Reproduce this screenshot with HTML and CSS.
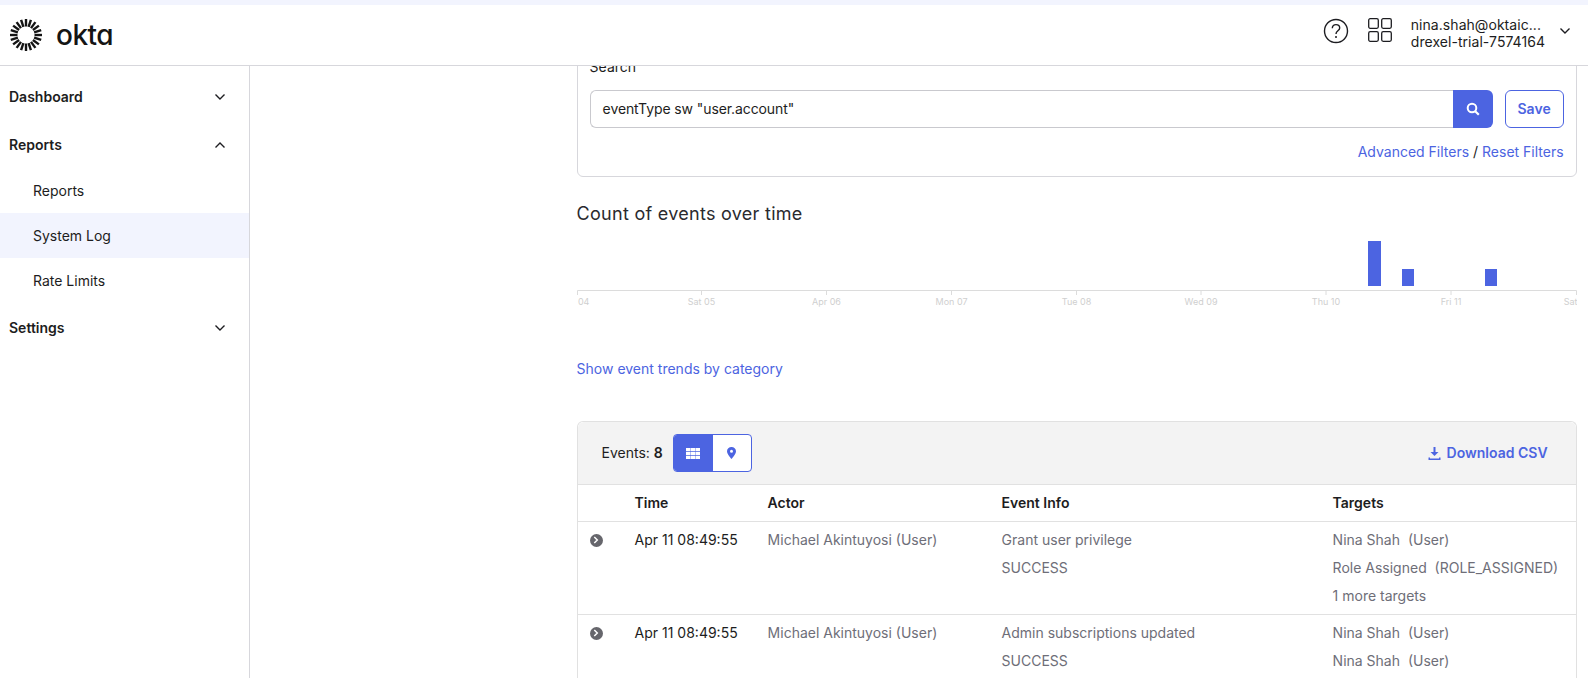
FILE: index.html
```html
<!DOCTYPE html>
<html lang="en">
<head>
<meta charset="utf-8">
<title>System Log</title>
<link rel="stylesheet" href="styles.css">
</head>
<body>
<div class="strip"></div>
<header class="topbar">
  <div class="brand">
    <svg class="sunburst" width="34" height="34" viewBox="-17 -17 34 34" aria-hidden="true">
      <g stroke="#141414" stroke-width="2.4" fill="none">
        <path d="M0-8.5V-16"/><path d="M2.6-8.1L4.9-15.2"/><path d="M5-6.9L9.4-12.9"/><path d="M6.9-5L12.9-9.4"/><path d="M8.1-2.6L15.2-4.9"/><path d="M8.5 0H16"/><path d="M8.1 2.6L15.2 4.9"/><path d="M6.9 5L12.9 9.4"/><path d="M5 6.9L9.4 12.9"/><path d="M2.6 8.1L4.9 15.2"/><path d="M0 8.5V16"/><path d="M-2.6 8.1L-4.9 15.2"/><path d="M-5 6.9L-9.4 12.9"/><path d="M-6.9 5L-12.9 9.4"/><path d="M-8.1 2.6L-15.2 4.9"/><path d="M-8.5 0H-16"/><path d="M-8.1-2.6L-15.2-4.9"/><path d="M-6.9-5L-12.9-9.4"/><path d="M-5-6.9L-9.4-12.9"/><path d="M-2.6-8.1L-4.9-15.2"/>
      </g>
    </svg>
    <span class="wordmark">okta</span>
  </div>
  <div class="top-actions">
    <svg class="help" width="26" height="26" viewBox="0 0 26 26" aria-hidden="true">
      <circle cx="13" cy="13" r="11.5" fill="none" stroke="#1d1d21" stroke-width="1.4"/>
      <path d="M9.3 10.2c0-2.2 1.6-3.6 3.7-3.6s3.7 1.4 3.7 3.3c0 2.8-3.7 3-3.7 6" fill="none" stroke="#1d1d21" stroke-width="1.4"/>
      <circle cx="13" cy="19" r="1" fill="#1d1d21"/>
    </svg>
    <svg class="apps" width="24" height="24" viewBox="0 0 24 24" aria-hidden="true">
      <g fill="none" stroke="#1d1d21" stroke-width="1.3">
        <rect x="0.7" y="0.7" width="9.6" height="9.6" rx="1.5"/><rect x="13.7" y="0.7" width="9.6" height="9.6" rx="1.5"/>
        <rect x="0.7" y="13.7" width="9.6" height="9.6" rx="1.5"/><rect x="13.7" y="13.7" width="9.6" height="9.6" rx="1.5"/>
      </g>
    </svg>
    <div class="user">
      <div>nina.shah@oktaic...</div>
      <div>drexel-trial-7574164</div>
    </div>
    <svg class="chev" width="12" height="8" viewBox="0 0 12 8" aria-hidden="true"><path d="M1.5 1.5L6 6l4.5-4.5" fill="none" stroke="#1d1d21" stroke-width="1.4"/></svg>
  </div>
</header>
<div class="shell">
  <nav class="side">
    <div class="nav-group"><span>Dashboard</span><svg class="chev" width="12" height="8" viewBox="0 0 12 8" aria-hidden="true"><path d="M1.5 1.5L6 6l4.5-4.5" fill="none" stroke="#1d1d21" stroke-width="1.4"/></svg></div>
    <div class="nav-group reports"><span>Reports</span><svg class="chev" width="12" height="8" viewBox="0 0 12 8" aria-hidden="true"><path d="M1.5 6.5L6 2l4.5 4.5" fill="none" stroke="#1d1d21" stroke-width="1.4"/></svg></div>
    <div class="nav-sub">Reports</div>
    <div class="nav-sub active">System Log</div>
    <div class="nav-sub">Rate Limits</div>
    <div class="nav-group settings"><span>Settings</span><svg class="chev" width="12" height="8" viewBox="0 0 12 8" aria-hidden="true"><path d="M1.5 1.5L6 6l4.5-4.5" fill="none" stroke="#1d1d21" stroke-width="1.4"/></svg></div>
  </nav>
  <main class="main">
    <section class="search-panel">
      <div class="search-label">Search</div>
      <div class="search-row">
        <div class="search-input">eventType sw "user.account"</div>
        <button class="search-btn" type="button" aria-label="Search">
          <svg width="14" height="14" viewBox="0 0 14 14" aria-hidden="true"><circle cx="6" cy="6" r="4.3" fill="none" stroke="#fff" stroke-width="2"/><path d="M9.2 9.2L12.8 12.8" stroke="#fff" stroke-width="2.2"/></svg>
        </button>
        <button class="save-btn" type="button">Save</button>
      </div>
      <div class="filter-links"><a>Advanced Filters</a> / <a>Reset Filters</a></div>
    </section>
    <h2 class="chart-title">Count of events over time</h2>
    <svg class="chart" width="1000" height="72" viewBox="0 0 1000 72" aria-label="Count of events over time">
      <rect x="791" y="4" width="13" height="45" fill="#4c64e1"/>
      <rect x="825" y="32" width="12" height="17" fill="#4c64e1"/>
      <rect x="908" y="32" width="12" height="17" fill="#4c64e1"/>
      <path d="M0.5 58V53.5H999.5V58M124.5 53.5V58M249.5 53.5V58M374.5 53.5V58M499.5 53.5V58M624 53.5V58M749 53.5V58M874 53.5V58" fill="none" stroke="#dcdcdc" stroke-width="1"/>
      <g class="tick-labels" text-anchor="middle">
        <text x="0" y="68">Fri 04</text>
        <text x="124.5" y="68">Sat 05</text>
        <text x="249.5" y="68">Apr 06</text>
        <text x="374.5" y="68">Mon 07</text>
        <text x="499.5" y="68">Tue 08</text>
        <text x="624" y="68">Wed 09</text>
        <text x="749" y="68">Thu 10</text>
        <text x="874" y="68">Fri 11</text>
        <text x="999.5" y="68">Sat 12</text>
      </g>
    </svg>
    <a class="trends">Show event trends by category</a>
    <section class="events">
      <div class="events-head">
        <div class="events-left">
          <span class="events-count">Events: <b>8</b></span>
          <div class="toggle">
            <span class="toggle-btn on">
              <svg width="14" height="11" viewBox="0 0 14 11" aria-hidden="true"><path fill="#fff" d="M0 0h4.4v3.2H0zM4.8 0h4.4v3.2H4.8zM9.6 0H14v3.2H9.6zM0 3.9h4.4v3.2H0zM4.8 3.9h4.4v3.2H4.8zM9.6 3.9H14v3.2H9.6zM0 7.8h4.4V11H0zM4.8 7.8h4.4V11H4.8zM9.6 7.8H14V11H9.6z"/></svg>
            </span>
            <span class="toggle-btn">
              <svg width="9" height="12" viewBox="0 0 9 12" aria-hidden="true"><path fill="#4c64e1" fill-rule="evenodd" d="M4.5 0C2 0 0 1.9 0 4.3 0 7.2 4.5 12 4.5 12S9 7.2 9 4.3C9 1.9 7 0 4.5 0zm0 5.8a1.5 1.5 0 1 1 0-3 1.5 1.5 0 0 1 0 3z"/></svg>
            </span>
          </div>
        </div>
        <a class="download">
          <svg width="13" height="13" viewBox="0 0 13 13" aria-hidden="true"><path fill="#4c64e1" d="M5.5 0h2v5h3l-4 4-4-4h3zM0.5 10.5h1.5v1h9v-1h1.5V13h-12z"/></svg>
          Download CSV
        </a>
      </div>
      <table class="log">
        <colgroup><col class="c-arrow"><col class="c-time"><col class="c-actor"><col class="c-info"><col></colgroup>
        <thead>
          <tr><th></th><th>Time</th><th>Actor</th><th>Event Info</th><th>Targets</th></tr>
        </thead>
        <tbody>
          <tr>
            <td><span class="expand"><svg width="6" height="8" viewBox="0 0 6 8" aria-hidden="true"><path d="M1.3 1L4.3 4l-3 3" fill="none" stroke="#fff" stroke-width="1.5"/></svg></span></td>
            <td class="time">Apr 11 08:49:55</td>
            <td>Michael Akintuyosi (User)</td>
            <td><div>Grant user privilege</div><div>SUCCESS</div></td>
            <td><div>Nina Shah &nbsp;(User)</div><div>Role Assigned &nbsp;(ROLE_ASSIGNED)</div><div>1 more targets</div></td>
          </tr>
          <tr>
            <td><span class="expand"><svg width="6" height="8" viewBox="0 0 6 8" aria-hidden="true"><path d="M1.3 1L4.3 4l-3 3" fill="none" stroke="#fff" stroke-width="1.5"/></svg></span></td>
            <td class="time">Apr 11 08:49:55</td>
            <td>Michael Akintuyosi (User)</td>
            <td><div>Admin subscriptions updated</div><div>SUCCESS</div></td>
            <td><div>Nina Shah &nbsp;(User)</div><div>Nina Shah &nbsp;(User)</div></td>
          </tr>
        </tbody>
      </table>
    </section>
  </main>
</div>
</body>
</html>
```
FILE: styles.css
```css
* { box-sizing: border-box; }
html, body { margin: 0; height: 100%; overflow: hidden; }
body {
  background: #fff;
  color: #1d1d21;
  font-family: Inter, "Liberation Sans", sans-serif;
  font-size: 14px;
  line-height: 20px;
  display: flex;
  flex-direction: column;
}
svg { display: block; flex: none; }
a { color: #4c64e1; }

.strip { height: 5px; background: #f2f4fe; flex: none; }
.topbar {
  height: 61px;
  flex: none;
  display: flex;
  align-items: center;
  justify-content: space-between;
  border-bottom: 1px solid #d7d7dc;
  padding: 0 17px 0 9px;
  background: #fff;
  position: relative;
  z-index: 1;
}
.brand { display: flex; align-items: center; gap: 13px; }
.wordmark {
  font-size: 28px;
  font-weight: 500;
  line-height: 34px;
  letter-spacing: -0.5px;
  color: #141414;
  font-feature-settings: "cv11" 1;
}
.top-actions { display: flex; align-items: center; padding-bottom: 8px; }
.help { margin-right: 19px; }
.apps { margin-right: 19px; margin-bottom: 3px; }
.user {
  font-size: 14px;
  line-height: 17px;
  letter-spacing: 0.05px;
  margin-top: 3px;
  margin-right: 14px;
}

.shell { flex: 1; display: flex; min-height: 0; }
.side { width: 250px; flex: none; border-right: 1px solid #d7d7dc; padding-top: 8px; }
.nav-group {
  height: 45px;
  display: flex;
  align-items: center;
  justify-content: space-between;
  padding: 0 23px 0 9px;
  font-weight: 600;
}
.nav-group.reports { height: 47px; margin-top: 2px; }
.nav-group.settings { margin-top: 2px; }
.nav-sub { height: 45px; display: flex; align-items: center; padding-left: 33px; }
.nav-sub.active { background: #f2f4fe; }

.main { flex: 1; min-width: 0; padding-left: 326.6px; overflow: hidden; }
.search-panel {
  width: 1000px;
  height: 141px;
  margin-top: -30px;
  border: 1px solid #d7d7dc;
  border-radius: 6px;
  padding: 20px 12px 0;
}
.search-label { margin-bottom: 13px; }
.search-row { display: flex; height: 38px; }
.search-input {
  width: 863px;
  border: 1px solid #c9c9ce;
  border-right: 0;
  border-radius: 6px 0 0 6px;
  padding: 0 12px;
  display: flex;
  align-items: center;
  letter-spacing: -0.1px;
}
.search-btn {
  width: 40px;
  border: 0;
  padding: 0;
  background: #4c64e1;
  border-radius: 0 6px 6px 0;
  display: flex;
  align-items: center;
  justify-content: center;
}
.save-btn {
  width: 59px;
  margin-left: 12px;
  background: #fff;
  border: 1px solid #4c64e1;
  border-radius: 6px;
  color: #4c64e1;
  font: 600 14px/20px Inter, "Liberation Sans", sans-serif;
  padding: 0;
}
.filter-links { text-align: right; margin-top: 14px; }

.chart-title {
  margin: 25px 0 0;
  font-size: 18px;
  line-height: 24px;
  font-weight: 400;
  letter-spacing: 0.28px;
  color: #2a2a2e;
}
.chart { margin-top: 11px; }
.tick-labels { font-size: 9px; fill: #cfcfcf; }
.trends { display: block; margin-top: 50px; line-height: 20px; width: 1000px; }

.events {
  width: 1000px;
  margin-top: 42px;
  border: 1px solid #e1e1e1;
  border-bottom: 0;
  border-radius: 6px 6px 0 0;
}
.events-head {
  height: 63px;
  background: #f3f3f3;
  border-radius: 6px 6px 0 0;
  border-bottom: 1px solid #e1e1e1;
  display: flex;
  align-items: center;
  justify-content: space-between;
  padding: 0 28px 0 24px;
}
.events-left { display: flex; align-items: center; gap: 10px; }
.events-count b { font-weight: 600; }
.toggle {
  display: flex;
  width: 79px;
  height: 38px;
  border: 1px solid #4c64e1;
  border-radius: 4px;
  background: #fff;
  overflow: hidden;
}
.toggle-btn { flex: 1; display: flex; align-items: center; justify-content: center; }
.toggle-btn.on { background: #4c64e1; flex: none; width: 39px; }
.download { display: flex; align-items: center; gap: 6px; font-weight: 600; }

.log { width: 100%; border-collapse: collapse; table-layout: fixed; }
.c-arrow { width: 57px; }
.c-time { width: 133px; }
.c-actor { width: 234px; }
.c-info { width: 331px; }
.log th {
  height: 36px;
  padding: 0;
  text-align: left;
  font-weight: 600;
  border-bottom: 1px solid #e1e1e1;
}
.log td {
  padding: 4px 0;
  vertical-align: top;
  line-height: 28px;
  color: #6e6e78;
  border-bottom: 1px solid #e1e1e1;
}
.log td:first-child { padding-left: 12px; }
.log td.time { color: #1d1d21; }
.expand {
  width: 13px;
  height: 13px;
  margin-top: 8px;
  border-radius: 50%;
  background: #66666c;
  display: flex;
  align-items: center;
  justify-content: center;
}
```
